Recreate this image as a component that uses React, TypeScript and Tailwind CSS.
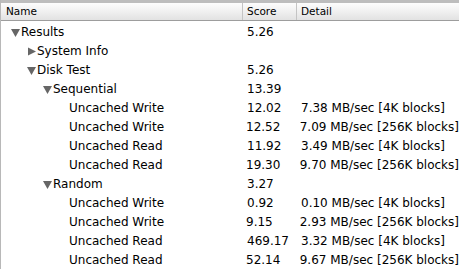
import React from 'react'

type Row = {
  label: string
  level: number
  toggle?: 'open' | 'closed'
  score?: string
  detail?: string
}

const rows: Row[] = [
  { label: 'Results', level: 0, toggle: 'open', score: '5.26' },
  { label: 'System Info', level: 1, toggle: 'closed' },
  { label: 'Disk Test', level: 1, toggle: 'open', score: '5.26' },
  { label: 'Sequential', level: 2, toggle: 'open', score: '13.39' },
  { label: 'Uncached Write', level: 3, score: '12.02', detail: '7.38 MB/sec [4K blocks]' },
  { label: 'Uncached Write', level: 3, score: '12.52', detail: '7.09 MB/sec [256K blocks]' },
  { label: 'Uncached Read', level: 3, score: '11.92', detail: '3.49 MB/sec [4K blocks]' },
  { label: 'Uncached Read', level: 3, score: '19.30', detail: '9.70 MB/sec [256K blocks]' },
  { label: 'Random', level: 2, toggle: 'open', score: '3.27' },
  { label: 'Uncached Write', level: 3, score: '0.92', detail: '0.10 MB/sec [4K blocks]' },
  { label: 'Uncached Write', level: 3, score: '9.15', detail: '2.93 MB/sec [256K blocks]' },
  { label: 'Uncached Read', level: 3, score: '469.17', detail: '3.32 MB/sec [4K blocks]' },
  { label: 'Uncached Read', level: 3, score: '52.14', detail: '9.67 MB/sec [256K blocks]' },
]

const indents = ['pl-[9px]', 'pl-[25px]', 'pl-[41px]', 'pl-[57px]']

function Triangle({ open }: { open: boolean }) {
  return (
    <svg width="11" height="11" viewBox="0 0 11 11" className="shrink-0">
      {open ? (
        <polygon points="1,2 10,2 5.5,10" fill="#666666" />
      ) : (
        <polygon points="2,1.5 10,5.5 2,9.5" fill="#666666" />
      )}
    </svg>
  )
}

export default function App() {
  return (
    <div
      className="w-[459px] h-[269px] bg-white overflow-hidden border-l border-[#b8b8b8] text-[12px] text-black"
      style={{ fontFamily: '"DejaVu Sans", Verdana, sans-serif' }}
    >
      <div className="h-[3px] bg-[#bdbdbd]" />
      <div className="flex h-[18px] bg-gradient-to-b from-[#fdfdfd] via-[#f0f0f0] to-[#e2e2e2] border-b border-[#9d9d9d] text-[10.5px] leading-[17px]">
        <div className="w-[241px] pl-[5px]">Name</div>
        <div className="w-[54px] border-l border-[#c4c4c4] pl-[4px]">Score</div>
        <div className="flex-1 border-l border-[#c4c4c4] pl-[4px]">Detail</div>
      </div>
      <div className="pt-[2px]">
        {rows.map((r, i) => (
          <div key={i} className="flex h-[19px] items-center leading-[19px]">
            <div className={`w-[241px] flex items-center ${indents[r.level]}`}>
              {r.toggle ? (
                <Triangle open={r.toggle === 'open'} />
              ) : (
                <span className="w-[11px] shrink-0" />
              )}
              <span className="whitespace-nowrap">{r.label}</span>
            </div>
            <div className="w-[54px] pl-[5px] whitespace-nowrap">{r.score}</div>
            <div className="flex-1 pl-[5px] whitespace-nowrap">{r.detail}</div>
          </div>
        ))}
      </div>
    </div>
  )
}
